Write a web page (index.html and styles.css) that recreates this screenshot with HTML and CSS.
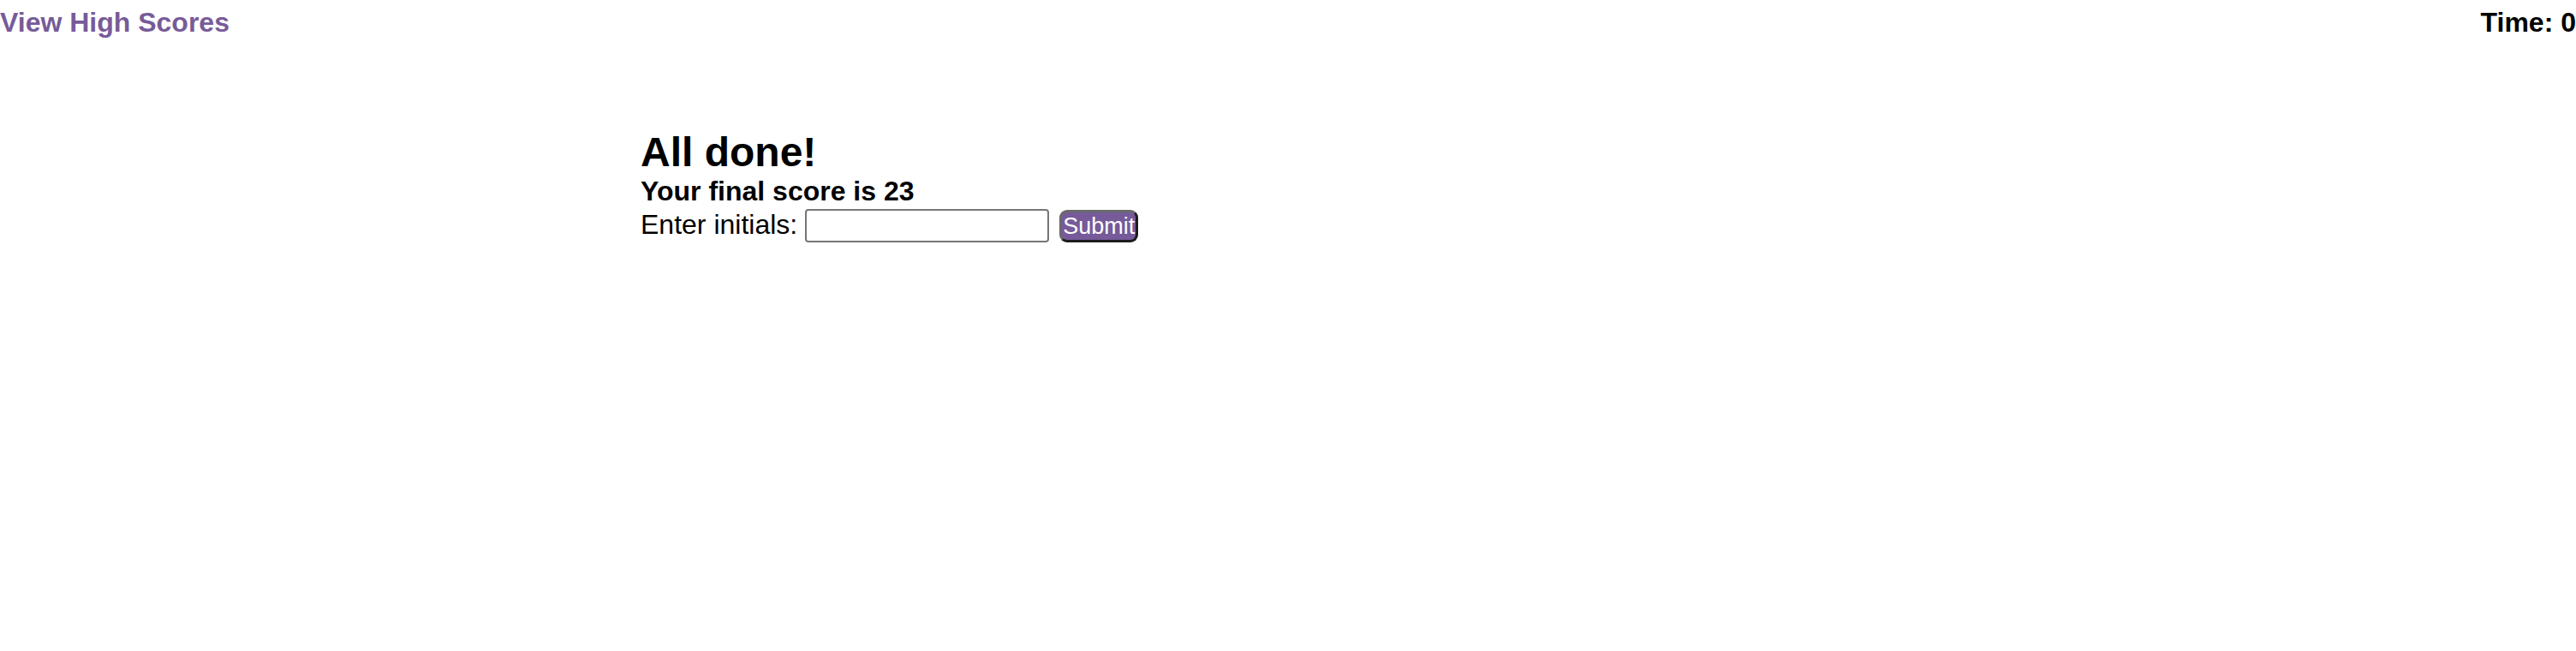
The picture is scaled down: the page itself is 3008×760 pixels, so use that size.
FILE: index.html
```html
<!DOCTYPE html>
<html lang="en">
<head>
<meta charset="utf-8">
<title>Quiz</title>
<link rel="stylesheet" href="styles.css">
</head>
<body>
<header class="topbar">
  <a class="scores-link" href="#">View High Scores</a>
  <div class="timer">Time: 0</div>
</header>
<main class="content">
  <h1 class="title">All done!</h1>
  <div class="score">Your final score is 23</div>
  <form class="entry">
    <label class="entry-label" for="initials">Enter initials:</label>
    <input class="entry-input" id="initials" type="text">
    <button class="entry-button" type="button">Submit</button>
  </form>
</main>
</body>
</html>
```
FILE: styles.css
```css
html, body {
  margin: 0;
  padding: 0;
  background: #ffffff;
}
body {
  font-family: "Liberation Sans", Arial, sans-serif;
  color: #000000;
}
.topbar {
  display: flex;
  justify-content: space-between;
  align-items: flex-start;
  padding-top: 8px;
  font-size: 32px;
  font-weight: bold;
  line-height: 36px;
}
.scores-link {
  color: #775b99;
  text-decoration: none;
}
.timer {
  color: #000000;
}
.content {
  width: 1512px;
  margin: 106px auto 0;
}
.title {
  margin: 0;
  font-size: 48px;
  font-weight: bold;
  line-height: 55px;
}
.score {
  font-size: 32px;
  font-weight: bold;
  line-height: 37px;
}
.entry {
  display: flex;
  align-items: center;
  margin: 0;
}
.entry-label {
  font-size: 32px;
  line-height: 37px;
  margin-right: 9px;
}
.entry-input {
  box-sizing: border-box;
  width: 285px;
  height: 39px;
  margin: 2px 12px 0 0;
  border: 2px solid #767676;
  border-radius: 4px;
  background: #ffffff;
  font-size: 26px;
  padding: 0 4px;
}
.entry-button {
  box-sizing: border-box;
  height: 38px;
  padding: 0 1px;
  margin: 2px 0 0 0;
  font-family: "Liberation Sans", Arial, sans-serif;
  font-size: 27px;
  line-height: 30px;
  color: #ffffff;
  background: #765a9a;
  border: 3px solid;
  border-color: #6a6a6a #1c1c1c #1c1c1c #6a6a6a;
  border-radius: 9px;
}
```
